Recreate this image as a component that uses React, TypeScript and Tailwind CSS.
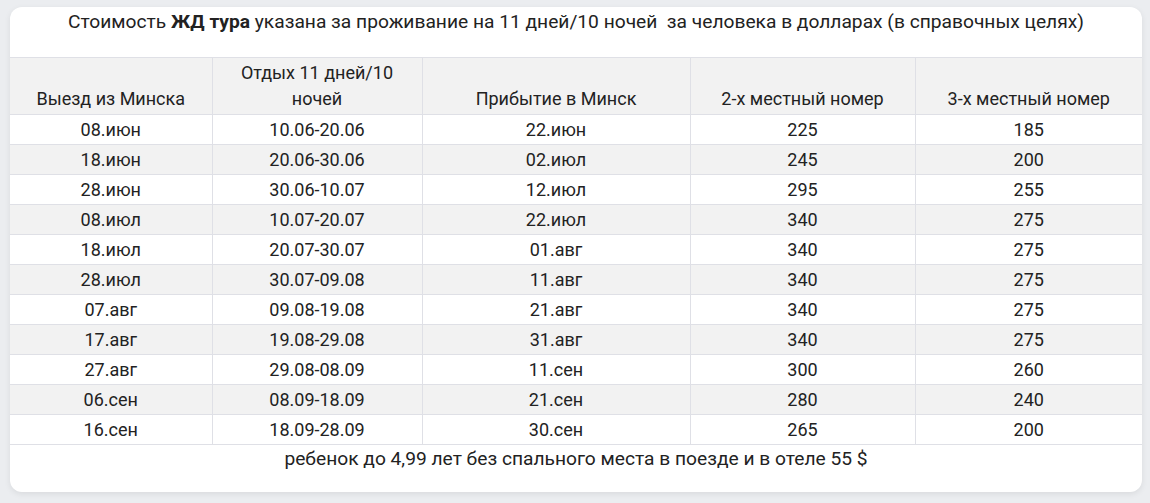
import React from "react";

const rows: [string, string, string, string, string][] = [
  ["08.июн", "10.06-20.06", "22.июн", "225", "185"],
  ["18.июн", "20.06-30.06", "02.июл", "245", "200"],
  ["28.июн", "30.06-10.07", "12.июл", "295", "255"],
  ["08.июл", "10.07-20.07", "22.июл", "340", "275"],
  ["18.июл", "20.07-30.07", "01.авг", "340", "275"],
  ["28.июл", "30.07-09.08", "11.авг", "340", "275"],
  ["07.авг", "09.08-19.08", "21.авг", "340", "275"],
  ["17.авг", "19.08-29.08", "31.авг", "340", "275"],
  ["27.авг", "29.08-08.09", "11.сен", "300", "260"],
  ["06.сен", "08.09-18.09", "21.сен", "280", "240"],
  ["16.сен", "18.09-28.09", "30.сен", "265", "200"],
];

export default function App() {
  return (
    <div
      className="w-[1150px] h-[503px] bg-[#ebedf0] pt-[7px] pl-[10px] overflow-hidden"
      style={{ fontFamily: "Roboto, 'Noto Sans', sans-serif" }}
    >
      <div className="w-[1132px] h-[485px] bg-white rounded-[12px] shadow-[0_2px_6px_rgba(0,0,0,0.08)] overflow-hidden text-[#222] text-[18px]">
        <div className="h-[50px] pt-[1px] text-center leading-[28px] text-[19.2px]">
          Стоимость <b className="font-bold">ЖД тура</b> указана за проживание на 11 дней/10 ночей&nbsp; за человека в долларах (в справочных целях)
        </div>
        <table className="w-[1132px] border-collapse table-fixed">
          <colgroup>
            <col className="w-[202px]" />
            <col className="w-[210px]" />
            <col className="w-[268px]" />
            <col className="w-[225px]" />
            <col className="w-[227px]" />
          </colgroup>
          <thead>
            <tr className="bg-[#f2f2f2] h-[57px]">
              {["Выезд из Минска", "Отдых 11 дней/10 ночей", "Прибытие в Минск", "2-х местный номер", "3-х местный номер"].map((h, i) => (
                <th
                  key={i}
                  className={`font-normal align-bottom border border-[#dfe0e6] leading-[26px] pb-[2px] px-[8px] ${i === 0 ? "border-l-0" : ""} ${i === 4 ? "border-r-0" : ""} ${i === 1 ? "px-[24px]" : ""}`}
                >
                  {h}
                </th>
              ))}
            </tr>
          </thead>
          <tbody>
            {rows.map((r, ri) => (
              <tr key={ri} className={`h-[30px] ${ri % 2 === 1 ? "bg-[#f2f2f2]" : "bg-white"}`}>
                {r.map((c, ci) => (
                  <td
                    key={ci}
                    className={`text-center border border-[#dfe0e6] leading-[28px] p-0 ${ci === 0 ? "border-l-0" : ""} ${ci === 4 ? "border-r-0" : ""}`}
                  >
                    {c}
                  </td>
                ))}
              </tr>
            ))}
          </tbody>
        </table>
        <div className="text-center leading-[30px] -mt-[1px] text-[19.2px]">
          ребенок до 4,99 лет без спального места в поезде и в отеле 55 $
        </div>
      </div>
    </div>
  );
}
